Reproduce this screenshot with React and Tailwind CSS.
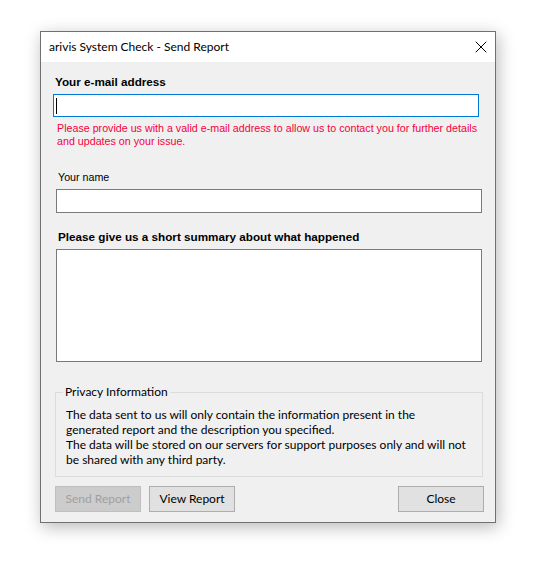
import { X } from "lucide-react";

const MS = { fontFamily: '"Liberation Sans", Arial, sans-serif' };
const UI = { fontFamily: 'Lato, "Noto Sans", sans-serif' };

export default function App() {
  return (
    <div className="min-h-[565px] w-[537px] bg-white pt-[31px] pl-[40px]">
      <div className="flex h-[492px] w-[456px] flex-col border border-[#707070] bg-[#f0f0f0] shadow-[2px_4px_16px_rgba(0,0,0,0.28)]">
        {/* title bar */}
        <div className="flex h-[30px] items-center justify-between bg-white pl-[8px] pr-[4px]">
          <span className="text-[12px] text-black" style={UI}>
            arivis System Check - Send Report
          </span>
          <X className="h-[20px] w-[20px] text-black" strokeWidth={1.2} />
        </div>

        <div className="flex flex-1 flex-col" style={MS}>
          <div className="ml-[14px] mt-[13px] text-[11.7px] font-bold leading-[13px] text-black">
            Your e-mail address
          </div>
          <div className="ml-[12px] mt-[6px] flex h-[23px] w-[426px] items-center border border-[#0078d7] bg-white pl-[2px]">
            <div className="h-[16px] w-px bg-black" />
          </div>
          <div className="ml-[16px] mt-[5px] whitespace-nowrap text-[10.7px] leading-[13px] text-[#f5003d]">
            Please provide us with a valid e-mail address to allow us to contact you for further details
            <br />
            and updates on your issue.
          </div>

          <div className="ml-[17px] mt-[23px] text-[10.7px] leading-[13px] text-black">Your name</div>
          <div className="ml-[15px] mt-[5px] h-[24px] w-[426px] border border-[#7a7a7a] bg-white" />

          <div className="ml-[17px] mt-[17px] text-[11.7px] font-bold leading-[13px] text-black">
            Please give us a short summary about what happened
          </div>
          <div className="ml-[15px] mt-[6px] h-[113px] w-[426px] border border-[#7a7a7a] bg-white" />

          {/* group box */}
          <div className="ml-[14px] mt-[30px] h-[85px] w-[428px] border border-[#dcdcdc] pl-[10px]" style={UI}>
            <div className="-mt-[9px] -ml-[3px] mb-[7px] w-fit bg-[#f0f0f0] px-[2px] text-[12px] leading-[16px] text-black">
              Privacy Information
            </div>
            <div className="whitespace-nowrap text-[12px] leading-[15px] text-black">
              The data sent to us will only contain the information present in the
              <br />
              generated report and the description you specified.
              <br />
              The data will be stored on our servers for support purposes only and will not
              <br />
              be shared with any third party.
            </div>
          </div>

          <div className="ml-[14px] mt-[9px] flex w-[429px] items-center gap-[8px]" style={UI}>
            <button className="h-[26px] w-[86px] border border-[#bfbfbf] bg-[#cccccc] text-[12px] text-[#a0a0a0]">
              Send Report
            </button>
            <button className="h-[26px] w-[86px] border border-[#adadad] bg-[#e1e1e1] text-[12px] text-black">
              View Report
            </button>
            <button className="ml-auto h-[26px] w-[86px] border border-[#adadad] bg-[#e1e1e1] text-[12px] text-black">
              Close
            </button>
          </div>
        </div>
      </div>
    </div>
  );
}
